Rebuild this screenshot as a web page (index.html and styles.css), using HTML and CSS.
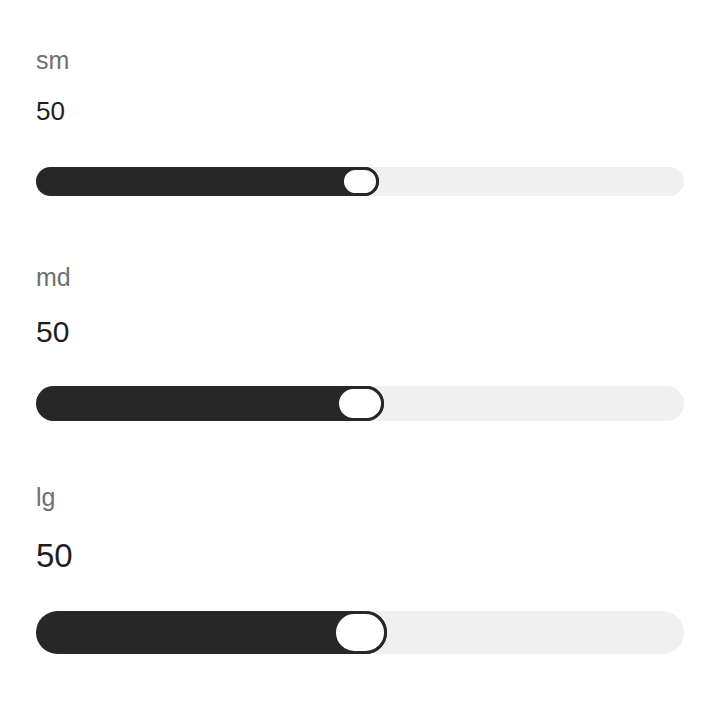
FILE: index.html
```html
<!DOCTYPE html>
<html lang="en">
<head>
<meta charset="utf-8">
<title>Slider sizes</title>
<link rel="stylesheet" href="styles.css">
</head>
<body>
  <main class="slider-list">
    <section class="slider-field slider-sm">
      <span class="slider-label">sm</span>
      <span class="slider-value">50</span>
      <div class="slider-track">
        <div class="slider-fill" style="--value: 50%">
          <span class="slider-thumb"></span>
        </div>
      </div>
    </section>

    <section class="slider-field slider-md">
      <span class="slider-label">md</span>
      <span class="slider-value">50</span>
      <div class="slider-track">
        <div class="slider-fill" style="--value: 50%">
          <span class="slider-thumb"></span>
        </div>
      </div>
    </section>

    <section class="slider-field slider-lg">
      <span class="slider-label">lg</span>
      <span class="slider-value">50</span>
      <div class="slider-track">
        <div class="slider-fill" style="--value: 50%">
          <span class="slider-thumb"></span>
        </div>
      </div>
    </section>
  </main>
</body>
</html>
```

FILE: styles.css
```css
* {
  box-sizing: border-box;
}

html,
body {
  margin: 0;
  background: #ffffff;
}

body {
  font-family: "Liberation Sans", Arial, sans-serif;
  color: #222222;
}

.slider-list {
  display: flex;
  flex-direction: column;
  padding: 48px 36px 0;
}

.slider-field {
  display: flex;
  flex-direction: column;
}

.slider-label {
  font-size: 25px;
  line-height: 25px;
  color: #707070;
}

.slider-value {
  line-height: 1;
  color: #1e1e1e;
}

.slider-track {
  width: 100%;
  border-radius: 999px;
  background: #f0f0f0;
}

.slider-fill {
  display: flex;
  justify-content: flex-end;
  height: 100%;
  width: calc(var(--value) + var(--thumb-w) / 2);
  border-radius: 999px;
  background: #272727;
}

.slider-thumb {
  width: var(--thumb-w);
  height: 100%;
  border: 3px solid #272727;
  border-radius: 999px;
  background: #ffffff;
}

/* size variants */
.slider-sm {
  --thumb-w: 38px;
}
.slider-sm .slider-value {
  font-size: 26px;
  margin-top: 25px;
}
.slider-sm .slider-track {
  height: 29px;
  margin-top: 43px;
}

.slider-md {
  --thumb-w: 48px;
  margin-top: 69px;
}
.slider-md .slider-value {
  font-size: 30px;
  margin-top: 27px;
}
.slider-md .slider-track {
  height: 35px;
  margin-top: 39px;
}

.slider-lg {
  --thumb-w: 54px;
  margin-top: 64px;
}
.slider-lg .slider-value {
  font-size: 33px;
  margin-top: 29px;
}
.slider-lg .slider-track {
  height: 43px;
  margin-top: 39px;
}
```
